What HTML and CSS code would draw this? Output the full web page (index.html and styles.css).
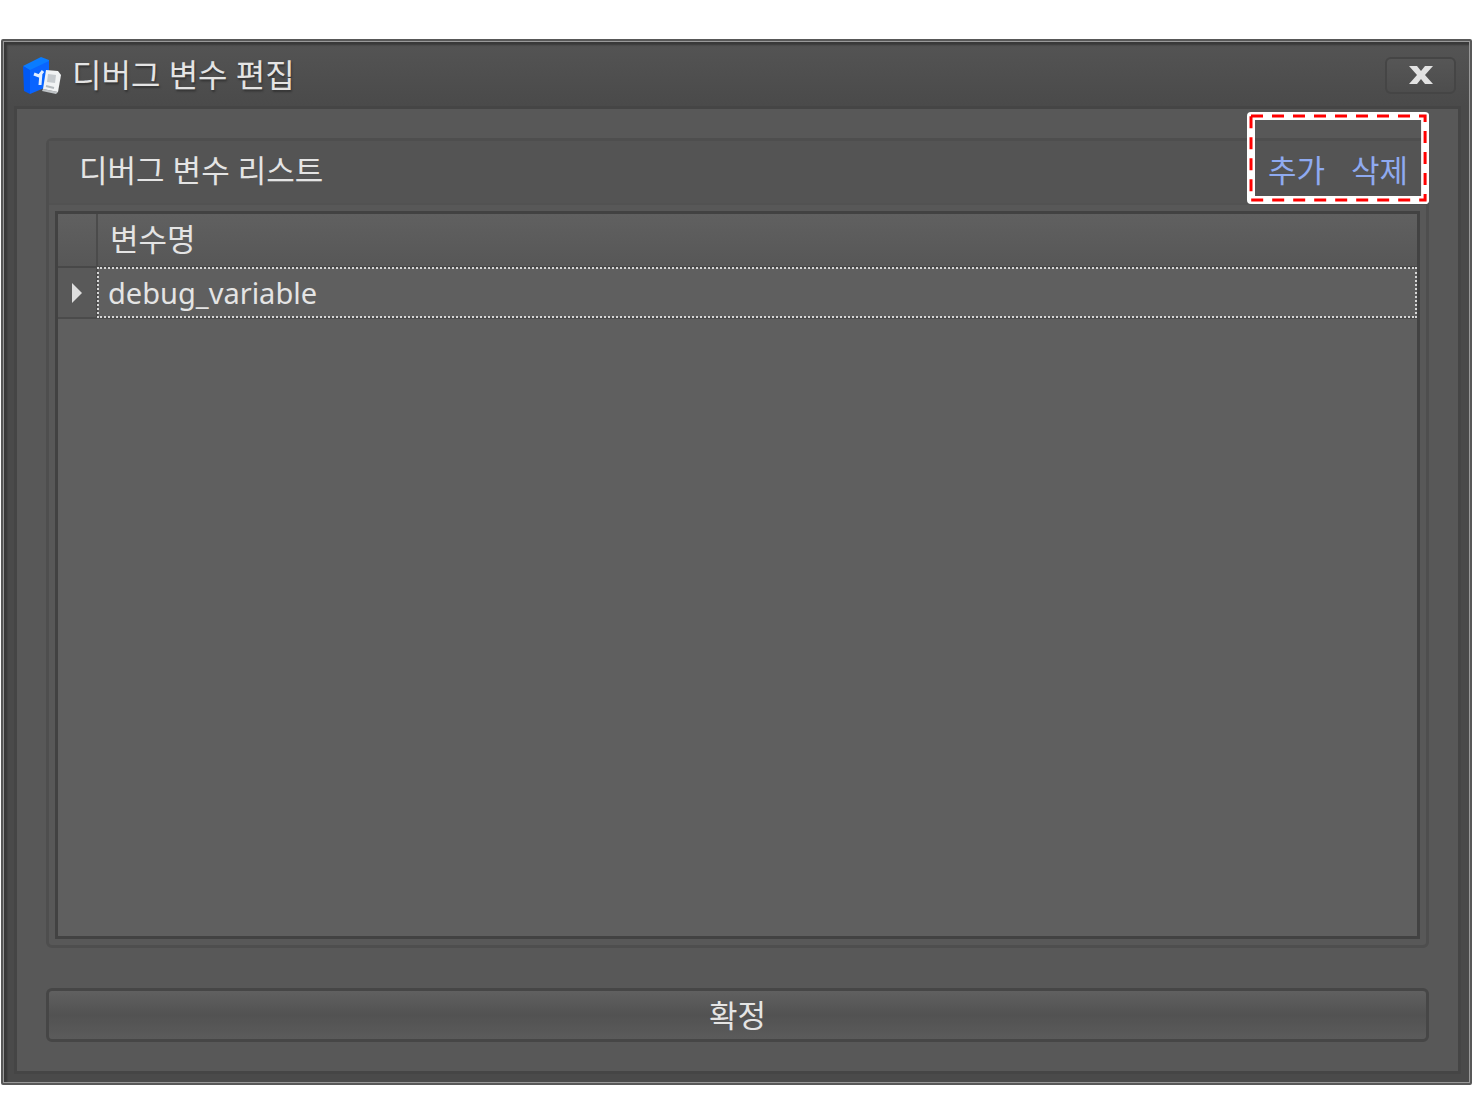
FILE: index.html
```html
<!DOCTYPE html>
<html lang="ko">
<head>
  <meta charset="UTF-8">
  <meta name="viewport" content="width=device-width, initial-scale=1.0">
  <title>디버그 변수 편집</title>
  <link rel="stylesheet" href="styles.css">
</head>
<body>
  <div class="window">
    <div class="frame">
      <!-- Title bar -->
      <header class="title-bar">
        <svg class="app-icon" width="40" height="40" viewBox="0 0 40 40" aria-hidden="true">
          <path fill="#0a7cff" d="M1 11 19 2 27 5 27 9 8 16z"/>
          <path fill="#0058f4" d="M1 11 8 15 8 39 2 36z"/>
          <path fill="#0964ff" d="M8 15 27 6 27 31 8 39z"/>
          <path fill="none" stroke="#e4efff" stroke-width="3" d="M12 19 17 21 21 16M19 18 18 30"/>
          <path fill="#bfc3c6" d="M21 34 36 37 34 39 20 36z"/>
          <path fill="#f1f3f4" d="M24 15 36 16 39 20 36 37 21 34z"/>
          <path fill="#c5cace" d="M26 19 34 20 33 28 25 27z"/>
          <path stroke="#b3b9bd" stroke-width="2" d="M24 31 32 33"/>
        </svg>
        <h1 class="title">디버그 변수 편집</h1>
        <button class="close" type="button" aria-label="닫기">
          <svg width="26" height="20" viewBox="0 0 26 20" aria-hidden="true">
            <path fill="#e2e2e2" d="M1 1H9L13 6 17 1H25L17 10 25 19H17L13 14 9 19H1L9 10z"/>
          </svg>
        </button>
      </header>

      <main class="client">
        <section class="group">
          <div class="group-header">
            <h2 class="group-title">디버그 변수 리스트</h2>
            <div class="actions">
              <a href="#add">추가</a>
              <a href="#delete">삭제</a>
              <!-- Dashed highlight around the two links -->
              <svg class="highlight" aria-hidden="true">
                <rect class="highlight-base" x="4" y="4"/>
                <rect class="highlight-dash" x="4" y="4"/>
              </svg>
            </div>
          </div>
          <div class="grid">
            <table class="variables">
              <thead>
                <tr>
                  <th class="marker"></th>
                  <th scope="col">변수명</th>
                </tr>
              </thead>
              <tbody>
                <tr>
                  <td class="marker">
                    <svg width="10" height="20" viewBox="0 0 10 20" aria-hidden="true"><path fill="#dedede" d="M0 0 10 10 0 20z"/></svg>
                  </td>
                  <td class="name selected">debug_variable</td>
                </tr>
              </tbody>
            </table>
          </div>
        </section>
        <button class="confirm" type="button">확정</button>
      </main>
    </div>
  </div>
</body>
</html>
```
FILE: styles.css
```css
* {
  box-sizing: border-box;
}
body {
  margin: 0;
  padding: 39px 4px 35px 1px;
  min-height: 100vh;
  display: flex;
  background-color: #fff;
  color: #e4e4e4;
  font-family: "Noto Sans", "Noto Sans CJK KR", sans-serif;
  font-size: 31px;
  line-height: 40px;
}
h1, h2 {
  margin: 0;
  font-size: 31px;
  font-weight: 400;
}
button {
  padding: 0;
  color: inherit;
  font: inherit;
  cursor: pointer;
}

/* Window frame */
.window {
  flex: 1;
  display: flex;
  border: 2px solid #585858;
  border-radius: 2px;
}
.frame {
  flex: 1;
  display: flex;
  flex-direction: column;
  padding: 0 8px 8px 10px;
  border: 1px solid #999;
  background: linear-gradient(#545454, #4a4a4a 64px);
  box-shadow: inset 3px 3px 2px #383838;
}

/* Title bar */
.title-bar {
  display: flex;
  align-items: center;
  height: 64px;
  padding: 2px 5px 0 8px;
}
.title {
  flex: 1;
  padding-left: 10px;
  font-size: 32px;
  text-shadow: 1px 2px 2px #333;
}
.close {
  display: flex;
  align-items: center;
  justify-content: center;
  width: 71px;
  height: 37px;
  border: 2px solid #454545;
  border-radius: 6px;
  background: linear-gradient(#565656, #4d4d4d);
}
.close:hover {
  background: #606060;
}

/* Content area */
.client {
  flex: 1;
  display: flex;
  flex-direction: column;
  gap: 40px;
  padding: 29px;
  border: 3px solid #454545;
  background-color: #585858;
}
.group {
  flex: 1;
  display: flex;
  flex-direction: column;
  padding: 0 6px 6px;
  border: 3px solid #4e4e4e;
  border-radius: 6px;
}
.group-header {
  display: flex;
  align-items: center;
  justify-content: space-between;
  height: 64px;
  margin: 0 -6px 6px;
  padding: 0 18px 4px 30px;
  border-bottom: 2px solid #525252;
  background-color: #545454;
}
.actions {
  position: relative;
  display: flex;
  gap: 26px;
}
.actions a {
  color: #8faaf0;
  text-decoration: none;
}
.actions a:hover {
  text-decoration: underline;
}
.highlight {
  position: absolute;
  top: -38px;
  left: -21px;
  width: calc(100% + 42px);
  height: calc(100% + 52px);
  pointer-events: none;
}
.highlight rect {
  width: calc(100% - 8px);
  height: calc(100% - 8px);
  fill: none;
}
.highlight-base {
  stroke: #fff;
  stroke-width: 8px;
  stroke-linejoin: round;
}
.highlight-dash {
  stroke: #f00;
  stroke-width: 3px;
  stroke-dasharray: 12px 9px;
}

/* Variable grid */
.grid {
  flex: 1;
  border: 3px solid #424242;
  background-color: #5f5f5f;
}
.variables {
  width: 100%;
  border-collapse: collapse;
}
.variables th {
  height: 53px;
  padding: 0 0 2px 12px;
  border-bottom: 2px solid #484848;
  background: linear-gradient(#606060, #575757);
  font-weight: 400;
  text-align: left;
}
.variables td {
  height: 51px;
  padding: 0 10px;
  border-bottom: 2px solid #4b4b4b;
}
.variables .marker {
  width: 39px;
  padding: 0;
  border-right: 2px solid #4b4b4b;
  background-color: #595959;
  text-align: center;
}
.marker svg {
  display: block;
  margin: 0 auto;
}
.name {
  font-size: 29px;
}
.variables .selected {
  outline: 2px dotted #d6d6d6;
  outline-offset: -2px;
}

/* Confirm button */
.confirm {
  height: 54px;
  border: 3px solid #464646;
  border-radius: 6px;
  background: linear-gradient(#606060, #525252 50%, #5b5b5b);
}
.confirm:hover {
  background: #646464;
}
```
